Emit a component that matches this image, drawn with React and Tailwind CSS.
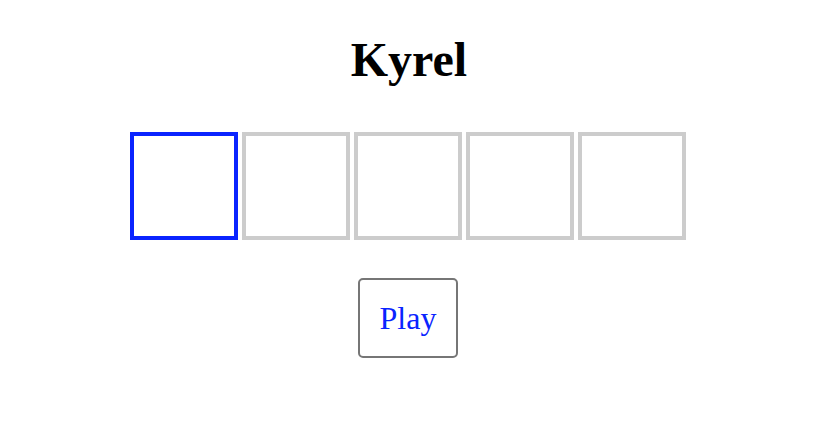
export default function App() {
  const slots = [0, 1, 2, 3, 4];
  return (
    <div className="flex min-h-[436px] flex-col items-center bg-white font-['Liberation_Serif','Times_New_Roman',serif] text-black">
      <h1 className="mt-[33px] text-[48px] font-bold leading-[53px]">Kyrel</h1>
      <div className="mt-[46px] flex gap-[4px] pr-[3px]">
        {slots.map((i) => (
          <div
            key={i}
            className={
              i === 0
                ? "h-[108px] w-[108px] border-4 border-[#0a24ff] bg-white"
                : "h-[108px] w-[108px] border-4 border-[#cccccc] bg-white"
            }
          />
        ))}
      </div>
      <button className="mt-[38px] mr-[2px] h-[80px] w-[100px] rounded-[5px] border-2 border-[#767676] bg-white text-[32px] leading-[37px] text-[#0a24ff]">
        Play
      </button>
    </div>
  );
}
